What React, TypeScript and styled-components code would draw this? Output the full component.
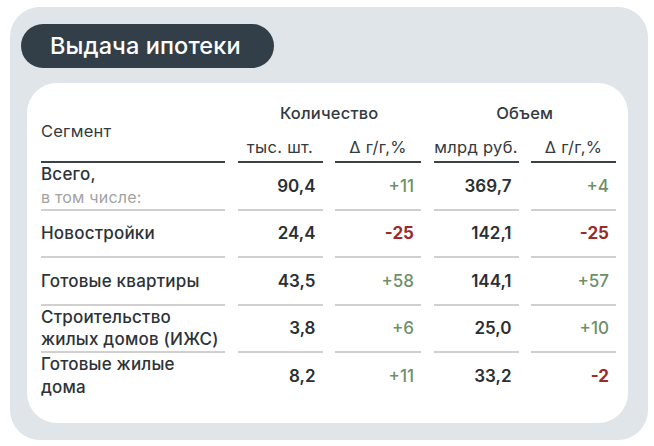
import styled, { createGlobalStyle } from "styled-components";

const GlobalStyle = createGlobalStyle`
  html, body {
    margin: 0;
    padding: 0;
    background: #ffffff;
  }
  body {
    font-family: Inter, "Noto Sans", sans-serif;
    color: #2c3036;
  }
`;

const COLUMNS = "184px 85px 86px 85px 85px";

const Panel = styled.div`
  margin: 7px 6px 6px 10px;
  width: 638px;
  height: 433px;
  box-sizing: border-box;
  background: #e0e5ea;
  border-radius: 30px;
  padding: 17px 20px 17px 11px;
  display: flex;
  flex-direction: column;
`;

const TitlePill = styled.div`
  align-self: flex-start;
  height: 44px;
  width: 253px;
  box-sizing: border-box;
  border-radius: 22px;
  background: #333f48;
  color: #ffffff;
  font-size: 23.5px;
  font-weight: 500;
  line-height: 44px;
  padding-left: 29px;
  letter-spacing: 0.1px;
`;

const Card = styled.div`
  margin: 15px 0 0 6px;
  flex: 1;
  background: #ffffff;
  border-radius: 30px;
  padding: 19px 0 0 14px;
`;

const Head = styled.div`
  display: grid;
  grid-template-columns: ${COLUMNS};
  grid-template-rows: 22px auto;
  column-gap: 12.5px;
  row-gap: 12px;
`;

const SegmentHead = styled.div`
  grid-row: 1 / span 2;
  display: flex;
  align-items: center;
  padding-bottom: 2px;
  font-size: 16.5px;
  letter-spacing: 0.2px;
  color: #333a40;
  border-bottom: 2px solid #38424b;
`;

const GroupHead = styled.div<{ $col: number }>`
  grid-row: 1;
  grid-column: ${(p) => p.$col} / span 2;
  text-align: center;
  font-size: 16.5px;
  font-weight: 500;
  line-height: 22px;
  letter-spacing: 0.2px;
  color: #333a40;
`;

const UnitHead = styled.div`
  grid-row: 2;
  text-align: center;
  font-size: 16.5px;
  line-height: 22px;
  padding-bottom: 3px;
  letter-spacing: 0.3px;
  color: #333a40;
  border-bottom: 2px solid #38424b;
`;

const Row = styled.div`
  display: grid;
  grid-template-columns: ${COLUMNS};
  column-gap: 12.5px;
`;

const Cell = styled.div<{ $last?: boolean }>`
  min-height: 45.5px;
  display: flex;
  align-items: center;
  justify-content: flex-end;
  padding-right: 7px;
  border-bottom: ${(p) => (p.$last ? "none" : "2px solid #d0d0d0")};
`;

const NameCell = styled(Cell)`
  flex-direction: column;
  align-items: flex-start;
  justify-content: center;
  padding-right: 0;
`;

const Name = styled.div`
  font-size: 17px;
  line-height: 22.5px;
  font-weight: 500;
  letter-spacing: 0.2px;
  white-space: nowrap;
  color: #2e3338;
`;

const Note = styled.div`
  font-size: 16px;
  line-height: 22.5px;
  letter-spacing: 0.2px;
  color: #a3a3a3;
`;

const Value = styled.span`
  font-size: 17px;
  font-weight: 600;
  color: #2a2f35;
`;

const Delta = styled.span<{ $neg: boolean }>`
  font-size: 17px;
  font-weight: ${(p) => (p.$neg ? 700 : 500)};
  color: ${(p) => (p.$neg ? "#9b2a2c" : "#6e8f68")};
`;

type Item = {
  name: string[];
  note?: string;
  count: string;
  countDelta: string;
  volume: string;
  volumeDelta: string;
};

const items: Item[] = [
  { name: ["Всего,"], note: "в том числе:", count: "90,4", countDelta: "+11", volume: "369,7", volumeDelta: "+4" },
  { name: ["Новостройки"], count: "24,4", countDelta: "-25", volume: "142,1", volumeDelta: "-25" },
  { name: ["Готовые квартиры"], count: "43,5", countDelta: "+58", volume: "144,1", volumeDelta: "+57" },
  { name: ["Строительство", "жилых домов (ИЖС)"], count: "3,8", countDelta: "+6", volume: "25,0", volumeDelta: "+10" },
  { name: ["Готовые жилые", "дома"], count: "8,2", countDelta: "+11", volume: "33,2", volumeDelta: "-2" },
];

export default function App() {
  return (
    <>
      <GlobalStyle />
      <Panel>
        <TitlePill>Выдача ипотеки</TitlePill>
        <Card>
          <Head>
            <SegmentHead>Сегмент</SegmentHead>
            <GroupHead $col={2}>Количество</GroupHead>
            <GroupHead $col={4}>Объем</GroupHead>
            <UnitHead>тыс. шт.</UnitHead>
            <UnitHead>Δ г/г,%</UnitHead>
            <UnitHead>млрд руб.</UnitHead>
            <UnitHead>Δ г/г,%</UnitHead>
          </Head>
          {items.map((it, i) => {
            const last = i === items.length - 1;
            return (
              <Row key={i}>
                <NameCell $last={last}>
                  {it.name.map((n) => (
                    <Name key={n}>{n}</Name>
                  ))}
                  {it.note && <Note>{it.note}</Note>}
                </NameCell>
                <Cell $last={last}>
                  <Value>{it.count}</Value>
                </Cell>
                <Cell $last={last}>
                  <Delta $neg={it.countDelta.startsWith("-")}>{it.countDelta}</Delta>
                </Cell>
                <Cell $last={last}>
                  <Value>{it.volume}</Value>
                </Cell>
                <Cell $last={last}>
                  <Delta $neg={it.volumeDelta.startsWith("-")}>{it.volumeDelta}</Delta>
                </Cell>
              </Row>
            );
          })}
        </Card>
      </Panel>
    </>
  );
}
